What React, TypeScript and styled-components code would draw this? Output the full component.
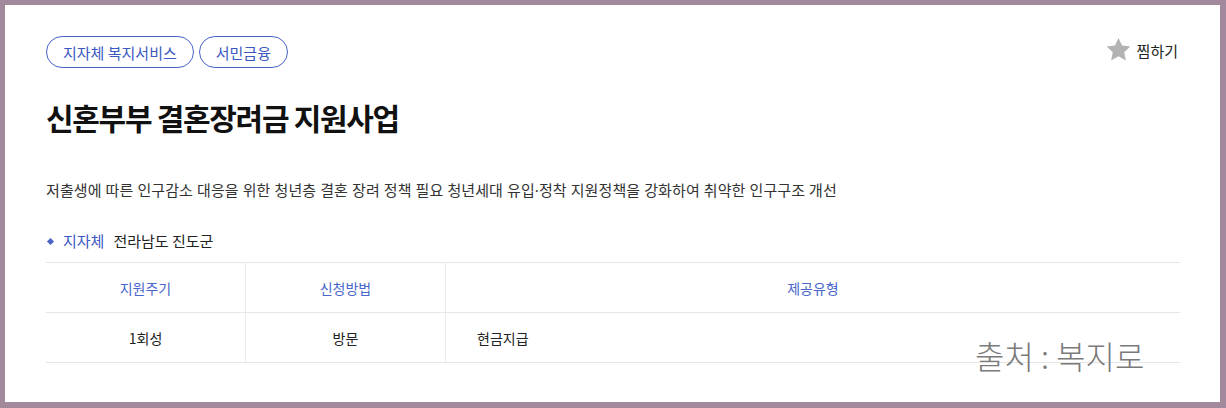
import React from 'react'
import styled, { createGlobalStyle } from 'styled-components'

const GlobalStyle = createGlobalStyle`
  html, body {
    margin: 0;
    padding: 0;
    background: #a2899b;
  }
  body {
    font-family: "Noto Sans CJK KR", "Noto Sans", sans-serif;
    color: #111;
  }
`

interface Row {
  cycle: string,
  method: string,
  type: string
}

const rows: Row[] = [
  { cycle: '1회성', method: '방문', type: '현금지급' }
]

const StarIcon = () => (
  <svg width="27" height="26" viewBox="0 0 24 24">
    <path
      d="M12 .9l3.3 7 7.6.9-5.6 5.2 1.5 7.6L12 17.8l-6.8 3.8 1.5-7.6L1.1 8.8l7.6-.9z"
      fill="#b3b3b3"
    />
  </svg>
)

export default function App() {
  return (<S.Frame>
    <GlobalStyle />
    <S.Card>
      <S.TopRow>
        <S.Tags>
          <S.Tag>지자체 복지서비스</S.Tag>
          <S.Tag>서민금융</S.Tag>
        </S.Tags>
        <S.Like>
          <StarIcon />
          <span>찜하기</span>
        </S.Like>
      </S.TopRow>

      <S.Title>신혼부부 결혼장려금 지원사업</S.Title>

      <S.Description>
        저출생에 따른 인구감소 대응을 위한 청년층 결혼 장려 정책 필요 청년세대 유입·정착 지원정책을 강화하여 취약한 인구구조 개선
      </S.Description>

      <S.Info>
        <S.Bullet />
        <S.InfoLabel>지자체</S.InfoLabel>
        <S.InfoValue>전라남도 진도군</S.InfoValue>
      </S.Info>

      <S.Table>
        <S.HeadCell>지원주기</S.HeadCell>
        <S.HeadCell>신청방법</S.HeadCell>
        <S.HeadCell>제공유형</S.HeadCell>
        {
          rows.map(row => (
            <React.Fragment key={row.cycle}>
              <S.Cell>{row.cycle}</S.Cell>
              <S.Cell>{row.method}</S.Cell>
              <S.Cell left>{row.type}</S.Cell>
            </React.Fragment>
          ))
        }
      </S.Table>

      <S.Watermark>출처 : 복지로</S.Watermark>
    </S.Card>
  </S.Frame>)
}

const S = {
  Frame: styled.div`
    width: 1226px;
    height: 408px;
    box-sizing: border-box;
    padding: 5px 6px 6px 5px;
  `,
  Card: styled.div`
    position: relative;
    height: 100%;
    box-sizing: border-box;
    background: #fff;
    padding: 31px 40px 0 41px;
  `,
  TopRow: styled.div`
    display: flex;
    justify-content: space-between;
    align-items: flex-start;
  `,
  Tags: styled.div`
    display: flex;
    gap: 5px;
  `,
  Tag: styled.span`
    display: inline-flex;
    align-items: center;
    height: 32px;
    box-sizing: border-box;
    padding: 0 16px;
    border: 1px solid #4a63c6;
    border-radius: 16px;
    color: #3a58c0;
    font-size: 15px;
  `,
  Like: styled.div`
    display: flex;
    align-items: center;
    gap: 5px;
    margin: 1px 2px 0 0;
    font-size: 15px;
    color: #222;
  `,
  Title: styled.h1`
    margin: 31px 0 0;
    font-size: 30px;
    line-height: 36px;
    font-weight: 700;
    letter-spacing: -1.3px;
    color: #111;
  `,
  Description: styled.p`
    margin: 44px 0 0;
    font-family: "Noto Sans", "Noto Sans CJK KR", sans-serif;
    font-size: 15px;
    line-height: 22px;
    letter-spacing: 0.1px;
    color: #333;
  `,
  Info: styled.div`
    display: flex;
    align-items: center;
    margin-top: 29px;
    font-size: 15px;
    line-height: 22px;
  `,
  Bullet: styled.span`
    width: 5px;
    height: 5px;
    margin: 0 10px 0 2px;
    background: #4a63c6;
    transform: rotate(45deg);
  `,
  InfoLabel: styled.span`
    color: #3a58c0;
    margin-right: 9px;
  `,
  InfoValue: styled.span`
    color: #222;
  `,
  Table: styled.div`
    display: grid;
    grid-template-columns: 199px 200px 1fr;
    margin-top: 10px;
    border-top: 1px solid #e6e6e6;
  `,
  HeadCell: styled.div`
    display: flex;
    align-items: center;
    justify-content: center;
    height: 49px;
    border-bottom: 1px solid #e6e6e6;
    border-left: 1px solid #ececec;
    font-size: 14px;
    color: #4866cc;
    &:first-child {
      border-left: none;
    }
  `,
  Cell: styled.div<{
    left?: boolean
  }>`
    display: flex;
    align-items: center;
    justify-content: ${props => props.left ? 'flex-start' : 'center'};
    padding-left: ${props => props.left ? '31px' : '0'};
    height: 49px;
    border-bottom: 1px solid #e6e6e6;
    border-left: 1px solid #ececec;
    font-size: 14px;
    color: #222;
    &:nth-child(3n + 1) {
      border-left: none;
    }
  `,
  Watermark: styled.div`
    position: absolute;
    left: 970px;
    top: 327px;
    font-size: 32px;
    font-weight: 300;
    color: #7a7a7a;
  `
}
